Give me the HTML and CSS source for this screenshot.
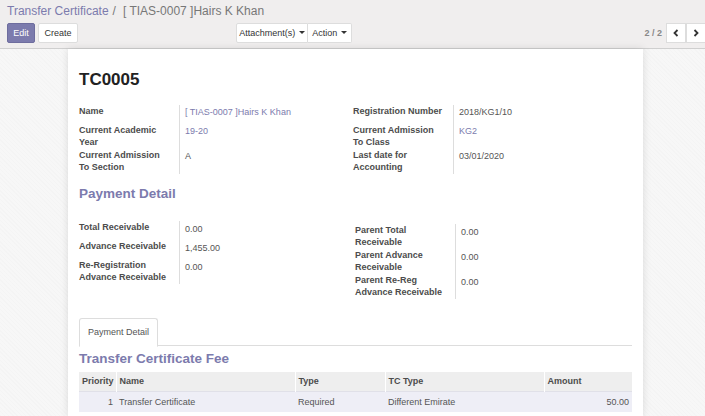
FILE: index.html
```html
<!DOCTYPE html>
<html>
<head>
<meta charset="utf-8">
<link rel="stylesheet" href="styles.css">
</head>
<body>
<div class="cp">
  <div class="crumbs"><span class="crumb-link">Transfer Certificate</span><span class="crumb-sep">/</span><span class="crumb-cur">[ TIAS-0007 ]Hairs K Khan</span></div>
  <div class="cp-row">
    <div class="btns">
      <button class="btn btn-primary">Edit</button>
      <button class="btn">Create</button>
    </div>
    <div class="sidebar">
      <button class="btn">Attachment(s) <span class="caret"></span></button><button class="btn">Action <span class="caret"></span></button>
    </div>
    <div class="pager">
      <span class="pager-val">2 / 2</span>
      <div class="pager-btns">
        <button class="btn pbtn"><svg width="8" height="8" viewBox="0 0 8 8"><path d="M5.5 1 L2.5 4 L5.5 7" fill="none" stroke="#333" stroke-width="1.8"/></svg></button><button class="btn pbtn"><svg width="8" height="8" viewBox="0 0 8 8"><path d="M2.5 1 L5.5 4 L2.5 7" fill="none" stroke="#333" stroke-width="1.8"/></svg></button>
      </div>
    </div>
  </div>
</div>
<div class="content">
  <div class="sheet">
    <h1 class="title">TC0005</h1>
    <div class="groups">
      <div class="group">
        <div class="lbl">Name</div><div class="val link">[ TIAS-0007 ]Hairs K Khan</div>
        <div class="lbl">Current Academic<br>Year</div><div class="val link">19-20</div>
        <div class="lbl">Current Admission<br>To Section</div><div class="val">A</div>
      </div>
      <div class="group">
        <div class="lbl">Registration Number</div><div class="val">2018/KG1/10</div>
        <div class="lbl">Current Admission<br>To Class</div><div class="val link">KG2</div>
        <div class="lbl">Last date for<br>Accounting</div><div class="val">03/01/2020</div>
      </div>
    </div>
    <h2 class="sec sec1">Payment Detail</h2>
    <div class="groups pay">
      <div class="group">
        <div class="lbl">Total Receivable</div><div class="val">0.00</div>
        <div class="lbl">Advance Receivable</div><div class="val">1,455.00</div>
        <div class="lbl">Re-Registration<br>Advance Receivable</div><div class="val">0.00</div>
      </div>
      <div class="group right">
        <div class="lbl">Parent Total<br>Receivable</div><div class="val">0.00</div>
        <div class="lbl">Parent Advance<br>Receivable</div><div class="val">0.00</div>
        <div class="lbl">Parent Re-Reg<br>Advance Receivable</div><div class="val">0.00</div>
      </div>
    </div>
    <div class="tabs"><div class="tab">Payment Detail</div></div>
    <h2 class="sec sec2">Transfer Certificate Fee</h2>
    <table class="grid">
      <thead>
        <tr><th class="c-pri">Priority</th><th class="c-name">Name</th><th class="c-type">Type</th><th class="c-tc">TC Type</th><th class="c-amt">Amount</th></tr>
      </thead>
      <tbody>
        <tr><td class="num">1</td><td>Transfer Certificate</td><td>Required</td><td>Different Emirate</td><td class="num">50.00</td></tr>
      </tbody>
    </table>
  </div>
</div>
</body>
</html>
```
FILE: styles.css
```css
* { box-sizing: border-box; }
html, body { margin: 0; padding: 0; }
body {
  width: 705px; height: 416px; overflow: hidden;
  font-family: "Liberation Sans", Arial, sans-serif;
  font-size: 9px; color: #4c4c4c;
  background: #f5f5f5;
}
.cp {
  height: 49px; background: #f0eeee; border-bottom: 1px solid #cfcfcf;
  padding: 2px 0 0 7px;
}
.crumbs { font-size: 12px; line-height: 18px; height: 21px; color: #777; white-space: nowrap; }
.crumb-link { color: #7c7bad; }
.crumb-sep { margin: 0 7px 0 4px; color: #777; }
.crumb-cur { color: #777; }
.cp-row { display: flex; align-items: center; height: 20px; }
.btn {
  font-family: inherit; font-size: 9px; height: 20px; padding: 0 6px;
  background: #fff; color: #333; border: 1px solid #ddd; border-radius: 2px;
  margin: 0; line-height: 18px; cursor: pointer;
}
.btn-primary { background: #7c7bad; color: #fff; border-color: #6e6d9e; width: 28px; padding: 0; }
.btns { display: flex; gap: 3px; width: 229px; }
.btns .btn:nth-child(2) { width: 40px; padding: 0; }
.sidebar { display: flex; }
.sidebar .btn:first-child { width: 72px; padding: 0; border-radius: 2px 0 0 2px; }
.sidebar .btn:last-child { width: 44px; padding: 0; border-left: 0; border-radius: 0 2px 2px 0; }
.caret {
  display: inline-block; width: 0; height: 0; vertical-align: middle;
  border-left: 3px solid transparent; border-right: 3px solid transparent; border-top: 3px solid #333;
  margin-left: 1px; position: relative; top: -1px;
}
.pager { margin-left: auto; display: flex; align-items: center; }
.pager-val { color: #888; font-weight: bold; margin-right: 4px; font-size: 9px; }
.pager-btns { display: flex; }
.pbtn { width: 20px; padding: 0; display: flex; align-items: center; justify-content: center; border-radius: 0; }
.pbtn + .pbtn { border-left: 1px solid #ddd; width: 19px; border-right: 0; }
.content {
  height: 367px;
  background-color: #f7f7f7;
  background-image: repeating-linear-gradient(45deg, rgba(0,0,0,0.012) 0 1px, transparent 1px 3px);
  padding-left: 68px;
}
.sheet {
  width: 575px; height: 100%; background: #fff; padding: 20px 11px 0 11px;
  box-shadow: 0 0 8px rgba(0,0,0,0.12);
}
.title { margin: 0; font-size: 17px; line-height: 22px; font-weight: bold; color: #222; height: 36px; }
.groups { display: grid; grid-template-columns: 274px 279px; }
.group { display: grid; grid-template-columns: 100px 1fr; align-content: start; }
.lbl { font-weight: bold; color: #4c4c4c; line-height: 12px; padding-bottom: 1px; }
.val { border-left: 1px solid #ddd; padding-left: 5px; min-height: 19px; line-height: 12px; padding-top: 1px; color: #555; }
.link { color: #7c7bad; }
.sec { margin: 0; font-size: 13.5px; line-height: 18px; color: #7c7bad; font-weight: bold; }
.groups:first-of-type { height: 78px; }
.sec1 { margin-top: 2px; height: 16px; }
.pay { margin-top: 20px; height: 97px; }
.pay .group.right { padding-top: 3px; padding-left: 2px; }
.pay .group.right .val { padding-top: 2px; }
.pay .group:first-child .val { padding-top: 2px; }
.tabs { border-bottom: 1px solid #ddd; height: 28px; display: flex; }
.tab {
  width: 79px; height: 29px; border: 1px solid #ddd; border-bottom-color: #fff; border-radius: 3px 3px 0 0;
  text-align: center; line-height: 27px; color: #555; background: #fff;
}
.sec2 { margin-top: 2px; height: 24px; line-height: 22px; }
.grid { border-collapse: collapse; width: 553px; table-layout: fixed; }
.grid th {
  background: #eeeeee; text-align: left; font-weight: bold; color: #4c4c4c;
  height: 19px; padding: 0 3px; border-left: 1px solid #fff;
}
.grid th:first-child { border-left: 0; }
.grid td { background: #eeeef6; height: 21px; padding: 0 3px; color: #555; border-top: 1px solid #e0e0e8; }
.grid .num { text-align: right; }
.c-pri { width: 37px; }
.c-name { width: 179px; }
.c-type { width: 90px; }
.c-tc { width: 159px; }
.c-amt { width: 88px; }
```
